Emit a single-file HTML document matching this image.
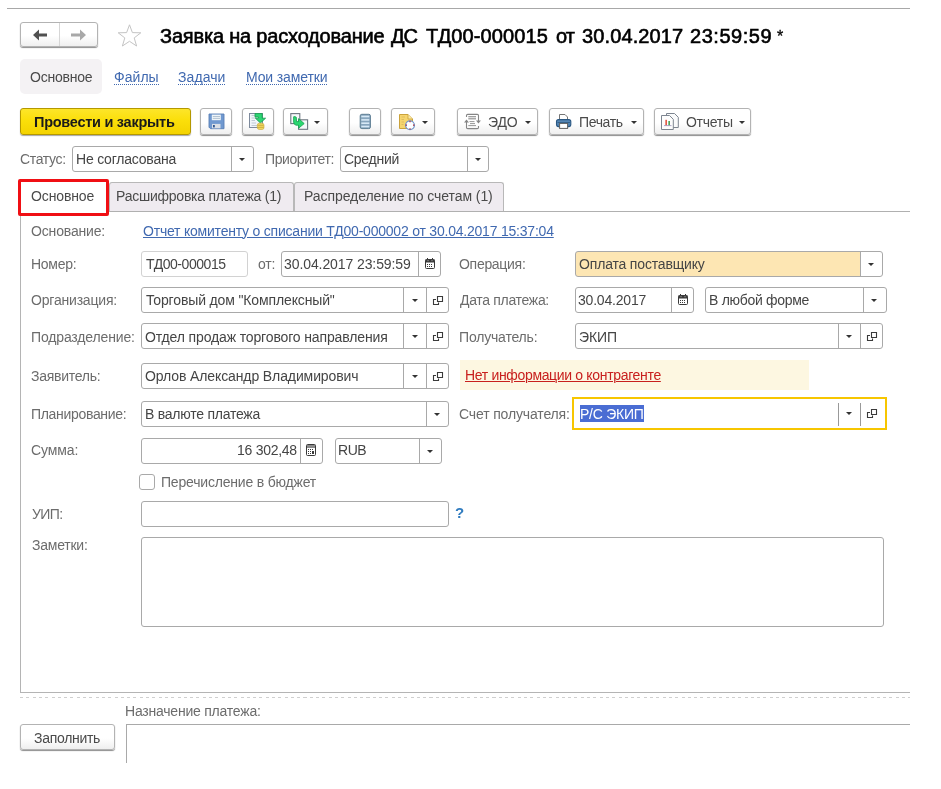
<!DOCTYPE html>
<html><head><meta charset="utf-8">
<style>
html,body{margin:0;padding:0;background:#fff;}
body{width:941px;height:789px;position:relative;overflow:hidden;font-family:"Liberation Sans",sans-serif;}
.s{position:absolute;box-sizing:border-box;}
.t{position:absolute;white-space:pre;line-height:16px;font-family:"Liberation Sans",sans-serif;z-index:5;will-change:transform;}
.measure .s{display:none;}
.und{text-decoration:underline;text-underline-offset:1px;text-decoration-thickness:1px;}
.dot{background-image:repeating-linear-gradient(90deg,currentColor 0 1px,transparent 1px 2px);background-size:100% 1px;background-repeat:no-repeat;background-position:0 100%;}
.fld{border:1px solid #a9a9a9;border-radius:3px;background:#fff;}
.sep{width:1px;background:#a9a9a9;}
.btn{border:1px solid #b3b3b3;border-radius:3px;background:linear-gradient(#fff 0%,#fff 55%,#efefef 100%);box-shadow:0 1px 1px rgba(0,0,0,.45);}
.arr{width:0;height:0;border-left:3px solid transparent;border-right:3px solid transparent;border-top:3px solid #333;}
.tab{border:1px solid #b8b8b8;border-bottom:none;border-radius:3px 3px 0 0;background:#efebf0;}
</style></head>
<body>
<!-- top line -->
<div class="s" style="left:7px;top:8px;width:903px;height:1px;background:#a8a8a8"></div>
<!-- nav buttons -->
<div class="s btn" style="left:20px;top:22px;width:78px;height:25px;"></div>
<div class="s" style="left:59px;top:23px;width:1px;height:23px;background:#d6d6d6"></div>
<svg class="s" style="left:30px;top:27px" width="20" height="16" viewBox="0 0 20 16"><path d="M3 8 L9 2.5 L9 6.5 L17 6.5 L17 9.5 L9 9.5 L9 13.5 Z" fill="#505050"/></svg>
<svg class="s" style="left:69px;top:27px" width="20" height="16" viewBox="0 0 20 16"><path d="M17 8 L11 2.5 L11 6.5 L2 6.5 L2 9.5 L11 9.5 L11 13.5 Z" fill="#a8a8a8"/></svg>
<!-- star -->
<svg class="s" style="left:116px;top:23px" width="27" height="25" viewBox="0 0 27 25"><path d="M13.5 1.8 L16.4 9.6 L24.8 9.8 L18.2 14.9 L20.6 23 L13.5 18.3 L6.4 23 L8.8 14.9 L2.2 9.8 L10.6 9.6 Z" fill="none" stroke="#c4c4c4" stroke-width="1"/></svg>

<!-- section nav bg -->
<div class="s" style="left:20px;top:59px;width:82px;height:35px;border-radius:5px;background:#f4f2f4"></div>

<!-- toolbar -->
<div class="s" style="left:20px;top:108px;width:171px;height:27px;border:1px solid #b49800;border-radius:3px;background:linear-gradient(#fde52a 0%,#fbdf0a 45%,#f4d300 100%);box-shadow:0 1px 1px rgba(0,0,0,.35)"></div>
<div class="s btn" style="left:200px;top:108px;width:32px;height:27px"></div>
<div class="s btn" style="left:242px;top:108px;width:32px;height:27px"></div>
<div class="s btn" style="left:283px;top:108px;width:45px;height:27px"></div>
<div class="s btn" style="left:349px;top:108px;width:32px;height:27px"></div>
<div class="s btn" style="left:391px;top:108px;width:44px;height:27px"></div>
<div class="s btn" style="left:457px;top:108px;width:81px;height:27px"></div>
<div class="s btn" style="left:549px;top:108px;width:95px;height:27px"></div>
<div class="s btn" style="left:654px;top:108px;width:97px;height:27px"></div>
<!-- icons: floppy -->
<svg class="s" style="left:204px;top:110px" width="25" height="22" viewBox="0 0 25 22">
<path d="M5 4 H20 V18.7 H6.5 L5 17.2 Z" fill="#7099d0" stroke="#5a80b6" stroke-width="0.9"/>
<rect x="7.8" y="4.6" width="9" height="5.6" fill="#eef4f8"/>
<path d="M8.8 6.5 H16 M8.8 8.4 H16" stroke="#a3b6c8" stroke-width="0.8"/>
<rect x="8" y="13.9" width="8.5" height="4.4" fill="#d9dfe6"/>
<rect x="9" y="15" width="1.8" height="2.4" fill="#2f558f"/>
</svg>
<!-- post icon -->
<svg class="s" style="left:245px;top:110px" width="25" height="22" viewBox="0 0 25 22">
<rect x="4.5" y="3.5" width="13" height="14" fill="#f1f5f9" stroke="#7e8a9c"/>
<path d="M6.5 5.5 H10 M6.5 8 H11 M6.5 10.5 H10 M6.5 13 H11 M6.5 15.5 H12" stroke="#b4bfcc" stroke-width="0.8"/>
<path d="M10 3.6 H17.2 V8.2 H20.6 L15.4 13 L10.4 8.2 H13.6 V7 H10 Z" fill="#2ed674" stroke="#159a4c" stroke-width="0.8"/>
<rect x="12.3" y="13.2" width="6.7" height="6.3" rx="2" fill="#f0d860" stroke="#c7a63a" stroke-width="0.6"/>
<path d="M12.6 15.3 H18.7 M12.6 17.4 H18.7" stroke="#c7a63a" stroke-width="0.8"/>
</svg>
<!-- copy/transfer icon -->
<svg class="s" style="left:286px;top:110px" width="25" height="22" viewBox="0 0 25 22">
<rect x="4.8" y="3.6" width="9" height="10" fill="#f6f8fa" stroke="#6d7580" stroke-width="1.1"/>
<rect x="12.6" y="9.8" width="9" height="9.5" fill="#f6f8fa" stroke="#6d7580" stroke-width="1.1"/>
<path d="M7.6 6.8 Q9 6.2 10.3 7.3 L10.6 11.6 H12.6 V8.6 L18.2 13.6 L12.6 18.2 V15.2 H10 Q7.6 14.6 7.6 12 Z" fill="#2bd771" stroke="#14a04e" stroke-width="0.8"/>
</svg>
<div class="s arr" style="left:314px;top:121px"></div>
<!-- list icon -->
<svg class="s" style="left:353px;top:110px" width="25" height="22" viewBox="0 0 25 22">
<rect x="7.2" y="4.3" width="10.2" height="14.3" rx="1.6" fill="#86a5bd" stroke="#5d7e93"/>
<rect x="8.3" y="5.7" width="8" height="1.6" fill="#d7e9f6"/><rect x="8.3" y="9.1" width="8" height="1.6" fill="#d7e9f6"/><rect x="8.3" y="12.4" width="8" height="1.6" fill="#d7e9f6"/><rect x="8.3" y="15.7" width="8" height="1.6" fill="#d7e9f6"/>
</svg>
<!-- doc with clock icon -->
<svg class="s" style="left:395px;top:110px" width="25" height="22" viewBox="0 0 25 22">
<path d="M4.5 4.5 H13 L17.5 9 V18.5 H4.5 Z" fill="#f6d56e" stroke="#caa23c"/>
<path d="M13 4.5 V9 H17.5" fill="#fbe9a6" stroke="#caa23c" stroke-width="0.8"/>
<path d="M6.5 7 H10 M6.5 9.5 H9 M6.5 12 H9 M6.5 14.5 H8.5" stroke="#d9b85a" stroke-width="0.8"/>
<circle cx="15" cy="15.2" r="4.4" fill="#fff" stroke="#7196c9" stroke-width="1.3"/>
<path d="M15 10.8 V12.2 M15 18.2 V19.6 M10.6 15.2 H12 M18 15.2 H19.4" stroke="#b02a3a" stroke-width="1.2"/>
</svg>
<div class="s arr" style="left:422px;top:121px"></div>
<!-- EDO icon -->
<svg class="s" style="left:460px;top:110px" width="25" height="22" viewBox="0 0 25 22">
<g fill="none" stroke="#858585" stroke-width="1.1">
<path d="M6.5 7 V5.6 Q6.5 4.4 7.7 4.4 H17.3 Q18.5 4.4 18.5 5.6 V11"/>
<path d="M6.5 12 V17.4 Q6.5 18.6 7.7 18.6 H17.3 Q18.5 18.6 18.5 17.4 V16"/>
</g>
<path d="M16 10.6 H20.9 L18.45 13.4 Z" fill="#858585"/>
<path d="M4 12.6 L6.5 9.6 L9 12.6 Z" fill="#858585"/>
<path d="M8.3 6.6 H16 M9.5 11.6 H14.5 M10 13.6 H15 M8.3 15.6 H16" stroke="#8a8a8a" stroke-width="0.9"/>
<path d="M8.3 8.6 H16" stroke="#a8a8a8" stroke-width="1.8"/>
</svg>
<div class="s arr" style="left:525px;top:121px"></div>
<!-- print icon -->
<svg class="s" style="left:552px;top:110px" width="25" height="22" viewBox="0 0 25 22">
<path d="M7.5 4.5 H13 L15.5 7 V10.5 H7.5 Z" fill="#fff" stroke="#747474"/>
<rect x="4.5" y="9.6" width="14.3" height="7" rx="2" fill="#5485b3" stroke="#2b5883" stroke-width="1.1"/>
<path d="M5.5 12.5 H18" stroke="#2b5883" stroke-width="0.8"/>
<rect x="7.6" y="13.4" width="8" height="5" fill="#fff" stroke="#5f5f5f"/>
</svg>
<div class="s arr" style="left:631px;top:121px"></div>
<!-- reports icon -->
<svg class="s" style="left:657px;top:110px" width="25" height="22" viewBox="0 0 25 22">
<path d="M9.5 3.5 H17.5 L21.3 7.3 V17.5 H9.5 Z" fill="#fafbfc" stroke="#7d8590"/>
<path d="M4.5 5.5 H12.5 L16.3 9.3 V19.5 H4.5 Z" fill="#fdfdfd" stroke="#7d8590"/>
<rect x="8.4" y="9.8" width="1.5" height="5.5" fill="#e24a35"/>
<rect x="11.4" y="11" width="1.5" height="4.3" fill="#3b9b4c"/>
<path d="M7 15.6 H14.5" stroke="#8a80b0" stroke-width="0.7"/>
</svg>
<div class="s arr" style="left:739px;top:121px"></div>

<!-- status row -->
<div class="s fld" style="left:72px;top:146px;width:182px;height:26px"></div>
<div class="s sep" style="left:231px;top:147px;height:24px"></div>
<div class="s arr" style="left:239px;top:158px"></div>
<div class="s fld" style="left:340px;top:146px;width:149px;height:26px"></div>
<div class="s sep" style="left:467px;top:147px;height:24px"></div>
<div class="s arr" style="left:475px;top:158px"></div>

<!-- tabs -->
<div class="s tab" style="left:109px;top:182px;width:185px;height:30px"></div>
<div class="s tab" style="left:294px;top:182px;width:210px;height:30px"></div>
<div class="s" style="left:109px;top:211px;width:801px;height:1px;background:#b0b0b0"></div>
<div class="s" style="left:18px;top:179px;width:91px;height:37px;border:3px solid #f00f14;border-radius:2px;background:#fff"></div>

<!-- panel borders -->
<div class="s" style="left:20px;top:216px;width:1px;height:477px;background:#b4b4b4"></div>
<div class="s" style="left:20px;top:692px;width:890px;height:1px;background:#b4b4b4"></div>

<!-- row: Номер -->
<div class="s fld" style="left:141px;top:251px;width:107px;height:26px;border-color:#d2d2d2"></div>
<div class="s fld" style="left:281px;top:251px;width:160px;height:26px"></div>
<div class="s sep" style="left:418px;top:252px;height:24px"></div>
<svg class="s" style="left:425px;top:258px" width="11" height="11" viewBox="0 0 11 11"><rect x="0.5" y="1.5" width="9" height="9" rx="1" fill="#fff" stroke="#3a3a3a"/><rect x="0.5" y="1.5" width="9" height="3" fill="#3a3a3a"/><rect x="2" y="0" width="1" height="2" fill="#3a3a3a"/><rect x="7" y="0" width="1" height="2" fill="#3a3a3a"/><rect x="2.5" y="2.2" width="1" height="1" fill="#bbb"/><rect x="6.5" y="2.2" width="1" height="1" fill="#bbb"/><rect x="2" y="6" width="1" height="1" fill="#3a3a3a"/><rect x="4" y="6" width="1" height="1" fill="#3a3a3a"/><rect x="6" y="6" width="1" height="1" fill="#3a3a3a"/><rect x="2" y="8" width="1" height="1" fill="#3a3a3a"/><rect x="4" y="8" width="1" height="1" fill="#3a3a3a"/><rect x="6" y="8" width="1" height="1" fill="#3a3a3a"/></svg>
<div class="s fld" style="left:575px;top:251px;width:308px;height:26px;background:linear-gradient(90deg,#fde6b3 0,#fde6b3 285px,#fff 285px)"></div>
<div class="s sep" style="left:860px;top:252px;height:24px"></div>
<div class="s arr" style="left:868px;top:263px"></div>

<!-- row: Организация -->
<div class="s fld" style="left:141px;top:287px;width:308px;height:26px"></div>
<div class="s sep" style="left:403px;top:288px;height:24px"></div>
<div class="s sep" style="left:426px;top:288px;height:24px"></div>
<div class="s arr" style="left:412px;top:299px"></div>
<svg class="s open" style="left:432px;top:295px" width="12" height="11" viewBox="0 0 12 11"><path d="M5.5 1.5 H10.5 V6.5 H5.5 Z" fill="none" stroke="#3a3a3a" stroke-width="1.1"/><path d="M4 4.5 H1.5 V9.5 H6.5 V7.5" fill="none" stroke="#3a3a3a" stroke-width="1.1"/></svg>
<div class="s fld" style="left:575px;top:287px;width:119px;height:26px"></div>
<div class="s sep" style="left:671px;top:288px;height:24px"></div>
<svg class="s" style="left:678px;top:294px" width="11" height="11" viewBox="0 0 11 11"><rect x="0.5" y="1.5" width="9" height="9" rx="1" fill="#fff" stroke="#3a3a3a"/><rect x="0.5" y="1.5" width="9" height="3" fill="#3a3a3a"/><rect x="2" y="0" width="1" height="2" fill="#3a3a3a"/><rect x="7" y="0" width="1" height="2" fill="#3a3a3a"/><rect x="2.5" y="2.2" width="1" height="1" fill="#bbb"/><rect x="6.5" y="2.2" width="1" height="1" fill="#bbb"/><rect x="2" y="6" width="1" height="1" fill="#3a3a3a"/><rect x="4" y="6" width="1" height="1" fill="#3a3a3a"/><rect x="6" y="6" width="1" height="1" fill="#3a3a3a"/><rect x="2" y="8" width="1" height="1" fill="#3a3a3a"/><rect x="4" y="8" width="1" height="1" fill="#3a3a3a"/><rect x="6" y="8" width="1" height="1" fill="#3a3a3a"/></svg>
<div class="s fld" style="left:705px;top:287px;width:182px;height:26px"></div>
<div class="s sep" style="left:863px;top:288px;height:24px"></div>
<div class="s arr" style="left:871px;top:299px"></div>

<!-- row: Подразделение -->
<div class="s fld" style="left:141px;top:323px;width:308px;height:26px"></div>
<div class="s sep" style="left:403px;top:324px;height:24px"></div>
<div class="s sep" style="left:426px;top:324px;height:24px"></div>
<div class="s arr" style="left:412px;top:335px"></div>
<svg class="s" style="left:432px;top:331px" width="12" height="11" viewBox="0 0 12 11"><path d="M5.5 1.5 H10.5 V6.5 H5.5 Z" fill="none" stroke="#3a3a3a" stroke-width="1.1"/><path d="M4 4.5 H1.5 V9.5 H6.5 V7.5" fill="none" stroke="#3a3a3a" stroke-width="1.1"/></svg>
<div class="s fld" style="left:575px;top:323px;width:308px;height:26px"></div>
<div class="s sep" style="left:838px;top:324px;height:24px"></div>
<div class="s sep" style="left:860px;top:324px;height:24px"></div>
<div class="s arr" style="left:846px;top:335px"></div>
<svg class="s" style="left:866px;top:331px" width="12" height="11" viewBox="0 0 12 11"><path d="M5.5 1.5 H10.5 V6.5 H5.5 Z" fill="none" stroke="#3a3a3a" stroke-width="1.1"/><path d="M4 4.5 H1.5 V9.5 H6.5 V7.5" fill="none" stroke="#3a3a3a" stroke-width="1.1"/></svg>

<!-- row: Заявитель -->
<div class="s fld" style="left:141px;top:363px;width:308px;height:26px"></div>
<div class="s sep" style="left:403px;top:364px;height:24px"></div>
<div class="s sep" style="left:426px;top:364px;height:24px"></div>
<div class="s arr" style="left:412px;top:375px"></div>
<svg class="s" style="left:432px;top:371px" width="12" height="11" viewBox="0 0 12 11"><path d="M5.5 1.5 H10.5 V6.5 H5.5 Z" fill="none" stroke="#3a3a3a" stroke-width="1.1"/><path d="M4 4.5 H1.5 V9.5 H6.5 V7.5" fill="none" stroke="#3a3a3a" stroke-width="1.1"/></svg>
<div class="s" style="left:460px;top:360px;width:349px;height:30px;background:#fdf7e1"></div>

<!-- row: Планирование -->
<div class="s fld" style="left:141px;top:401px;width:308px;height:26px"></div>
<div class="s sep" style="left:426px;top:402px;height:24px"></div>
<div class="s arr" style="left:434px;top:413px"></div>
<div class="s" style="left:572px;top:397px;width:315px;height:33px;border:2px solid #f7c600;background:#fff"></div>
<div class="s sep" style="left:838px;top:403px;height:23px;background:#999"></div>
<div class="s sep" style="left:860px;top:403px;height:23px;background:#999"></div>
<div class="s arr" style="left:846px;top:412px"></div>
<svg class="s" style="left:866px;top:408px" width="12" height="11" viewBox="0 0 12 11"><path d="M5.5 1.5 H10.5 V6.5 H5.5 Z" fill="none" stroke="#3a3a3a" stroke-width="1.1"/><path d="M4 4.5 H1.5 V9.5 H6.5 V7.5" fill="none" stroke="#3a3a3a" stroke-width="1.1"/></svg>
<div class="s" style="left:580px;top:405px;width:64px;height:17px;background:#4a6dd3"></div>

<!-- row: Сумма -->
<div class="s fld" style="left:141px;top:438px;width:182px;height:26px"></div>
<div class="s sep" style="left:300px;top:439px;height:24px"></div>
<svg class="s" style="left:306px;top:444px" width="11" height="12" viewBox="0 0 11 12"><rect x="0.5" y="0.5" width="9" height="11" rx="1" fill="#fff" stroke="#3a3a3a"/><rect x="1" y="1" width="8" height="3" fill="#8a8a8a"/><rect x="2" y="5" width="1" height="1" fill="#3a3a3a"/><rect x="4" y="5" width="1" height="1" fill="#3a3a3a"/><rect x="6" y="5" width="1" height="1" fill="#3a3a3a"/><rect x="2" y="7" width="1" height="1" fill="#3a3a3a"/><rect x="4" y="7" width="1" height="1" fill="#3a3a3a"/><rect x="6" y="7" width="2" height="3" fill="#3a3a3a"/><rect x="2" y="9" width="1" height="1" fill="#3a3a3a"/><rect x="4" y="9" width="1" height="1" fill="#3a3a3a"/></svg>
<div class="s fld" style="left:335px;top:438px;width:107px;height:26px"></div>
<div class="s sep" style="left:419px;top:439px;height:24px"></div>
<div class="s arr" style="left:427px;top:450px"></div>

<!-- checkbox -->
<div class="s" style="left:139px;top:474px;width:16px;height:16px;border:1px solid #a9a9a9;border-radius:3px;background:#fff"></div>

<!-- УИП -->
<div class="s fld" style="left:141px;top:501px;width:308px;height:26px"></div>
<!-- Заметки -->
<div class="s fld" style="left:141px;top:537px;width:743px;height:90px"></div>

<!-- dashed line -->
<div class="s" style="left:20px;top:697px;width:890px;height:1px;background:repeating-linear-gradient(90deg,#cfcfcf 0,#cfcfcf 3px,transparent 3px,transparent 6.3px)"></div>
<!-- Заполнить -->
<div class="s btn" style="left:20px;top:724px;width:95px;height:26px"></div>
<!-- Назначение field -->
<div class="s" style="left:126px;top:724px;width:784px;height:1px;background:#a9a9a9"></div>
<div class="s" style="left:126px;top:724px;width:1px;height:39px;background:#a9a9a9"></div>

<div id="t0" class="t" style="left:160.20px;top:28.00px;font-size:20px;font-weight:normal;letter-spacing:-0.189px;color:#000;-webkit-text-stroke:0.6px #000;">Заявка на расходование</div>
<div id="t1" class="t" style="left:390.70px;top:28.00px;font-size:20px;font-weight:normal;letter-spacing:-1.080px;color:#000;-webkit-text-stroke:0.6px #000;">ДС</div>
<div id="t2" class="t" style="left:426.20px;top:28.00px;font-size:20px;font-weight:normal;letter-spacing:0.108px;color:#000;-webkit-text-stroke:0.6px #000;">ТД00-000015</div>
<div id="t3" class="t" style="left:556.20px;top:28.00px;font-size:20px;font-weight:normal;letter-spacing:-0.900px;color:#000;-webkit-text-stroke:0.6px #000;">от</div>
<div id="t4" class="t" style="left:581.70px;top:28.00px;font-size:20px;font-weight:normal;letter-spacing:0.120px;color:#000;-webkit-text-stroke:0.6px #000;">30.04.2017</div>
<div id="t5" class="t" style="left:689.70px;top:28.00px;font-size:20px;font-weight:normal;letter-spacing:0.540px;color:#000;-webkit-text-stroke:0.6px #000;">23:59:59</div>
<div id="t6" class="t" style="left:777.20px;top:29.00px;font-size:16px;font-weight:normal;letter-spacing:0.000px;color:#000;-webkit-text-stroke:0.3px #000;">*</div>
<div id="t7" class="t" style="left:30.20px;top:69.00px;font-size:14px;font-weight:normal;letter-spacing:-0.231px;color:#4a4a4a;">Основное</div>
<div id="t8" class="t dot" style="left:113.70px;top:69.00px;font-size:14px;font-weight:normal;letter-spacing:0.045px;color:#4069b0;">Файлы</div>
<div id="t9" class="t dot" style="left:178.20px;top:69.00px;font-size:14px;font-weight:normal;letter-spacing:0.072px;color:#4069b0;">Задачи</div>
<div id="t10" class="t dot" style="left:246.20px;top:69.00px;font-size:14px;font-weight:normal;letter-spacing:-0.126px;color:#4069b0;">Мои заметки</div>
<div id="t11" class="t" style="left:34.20px;top:114.00px;font-size:14.5px;font-weight:bold;letter-spacing:-0.265px;color:#1a1a1a;">Провести и закрыть</div>
<div id="t12" class="t" style="left:488.20px;top:113.50px;font-size:14px;font-weight:normal;letter-spacing:-0.180px;color:#4a4a4a;">ЭДО</div>
<div id="t13" class="t" style="left:579.20px;top:113.50px;font-size:14px;font-weight:normal;letter-spacing:-0.360px;color:#4a4a4a;">Печать</div>
<div id="t14" class="t" style="left:685.70px;top:113.50px;font-size:14px;font-weight:normal;letter-spacing:-0.288px;color:#4a4a4a;">Отчеты</div>
<div id="t15" class="t" style="left:19.70px;top:151.00px;font-size:14px;font-weight:normal;letter-spacing:-0.330px;color:#6c6c6c;">Статус:</div>
<div id="t16" class="t" style="left:75.70px;top:151.00px;font-size:14px;font-weight:normal;letter-spacing:-0.208px;color:#454545;">Не согласована</div>
<div id="t17" class="t" style="left:264.70px;top:151.00px;font-size:14px;font-weight:normal;letter-spacing:-0.400px;color:#6c6c6c;">Приоритет:</div>
<div id="t18" class="t" style="left:343.70px;top:151.00px;font-size:14px;font-weight:normal;letter-spacing:-0.270px;color:#454545;">Средний</div>
<div id="t19" class="t" style="left:31.20px;top:188.00px;font-size:14px;font-weight:normal;letter-spacing:-0.129px;color:#4a4a4a;">Основное</div>
<div id="t20" class="t" style="left:116.20px;top:188.00px;font-size:14px;font-weight:normal;letter-spacing:-0.237px;color:#4a4a4a;">Расшифровка платежа (1)</div>
<div id="t21" class="t" style="left:304.20px;top:188.00px;font-size:14px;font-weight:normal;letter-spacing:-0.069px;color:#4a4a4a;">Распределение по счетам (1)</div>
<div id="t22" class="t" style="left:30.70px;top:223.00px;font-size:14px;font-weight:normal;letter-spacing:-0.160px;color:#6c6c6c;">Основание:</div>
<div id="t23" class="t und" style="left:142.70px;top:223.00px;font-size:14px;font-weight:normal;letter-spacing:-0.213px;color:#4069b0;">Отчет комитенту о списании ТД00-000002 от 30.04.2017 15:37:04</div>
<div id="t24" class="t" style="left:30.70px;top:256.00px;font-size:14px;font-weight:normal;letter-spacing:-0.288px;color:#6c6c6c;">Номер:</div>
<div id="t25" class="t" style="left:145.70px;top:256.00px;font-size:14px;font-weight:normal;letter-spacing:-0.450px;color:#454545;">ТД00-000015</div>
<div id="t26" class="t" style="left:258.20px;top:256.00px;font-size:14px;font-weight:normal;letter-spacing:-0.180px;color:#6c6c6c;">от:</div>
<div id="t27" class="t" style="left:284.20px;top:256.00px;font-size:14px;font-weight:normal;letter-spacing:-0.090px;color:#454545;">30.04.2017 23:59:59</div>
<div id="t28" class="t" style="left:459.20px;top:256.00px;font-size:14px;font-weight:normal;letter-spacing:-0.293px;color:#6c6c6c;">Операция:</div>
<div id="t29" class="t" style="left:579.20px;top:256.00px;font-size:14px;font-weight:normal;letter-spacing:-0.169px;color:#454545;">Оплата поставщику</div>
<div id="t30" class="t" style="left:30.70px;top:292.00px;font-size:14px;font-weight:normal;letter-spacing:-0.196px;color:#6c6c6c;">Организация:</div>
<div id="t31" class="t" style="left:146.20px;top:292.00px;font-size:14px;font-weight:normal;letter-spacing:-0.137px;color:#454545;">Торговый дом "Комплексный"</div>
<div id="t32" class="t" style="left:460.20px;top:292.00px;font-size:14px;font-weight:normal;letter-spacing:-0.315px;color:#6c6c6c;">Дата платежа:</div>
<div id="t33" class="t" style="left:578.20px;top:292.00px;font-size:14px;font-weight:normal;letter-spacing:-0.200px;color:#454545;">30.04.2017</div>
<div id="t34" class="t" style="left:709.20px;top:292.00px;font-size:14px;font-weight:normal;letter-spacing:-0.300px;color:#454545;">В любой форме</div>
<div id="t35" class="t" style="left:30.70px;top:328.50px;font-size:14px;font-weight:normal;letter-spacing:-0.152px;color:#6c6c6c;">Подразделение:</div>
<div id="t36" class="t" style="left:145.20px;top:328.50px;font-size:14px;font-weight:normal;letter-spacing:-0.136px;color:#454545;">Отдел продаж торгового направления</div>
<div id="t37" class="t" style="left:459.20px;top:328.50px;font-size:14px;font-weight:normal;letter-spacing:-0.180px;color:#6c6c6c;">Получатель:</div>
<div id="t38" class="t" style="left:579.20px;top:328.50px;font-size:14px;font-weight:normal;letter-spacing:-0.060px;color:#454545;">ЭКИП</div>
<div id="t39" class="t" style="left:31.20px;top:368.00px;font-size:14px;font-weight:normal;letter-spacing:-0.260px;color:#6c6c6c;">Заявитель:</div>
<div id="t40" class="t" style="left:145.20px;top:368.00px;font-size:14px;font-weight:normal;letter-spacing:-0.107px;color:#454545;">Орлов Александр Владимирович</div>
<div id="t41" class="t und" style="left:465.20px;top:367.00px;font-size:14px;font-weight:normal;letter-spacing:-0.333px;color:#c8201e;">Нет информации о контрагенте</div>
<div id="t42" class="t" style="left:30.70px;top:406.00px;font-size:14px;font-weight:normal;letter-spacing:-0.315px;color:#6c6c6c;">Планирование:</div>
<div id="t43" class="t" style="left:144.70px;top:406.00px;font-size:14px;font-weight:normal;letter-spacing:-0.240px;color:#454545;">В валюте платежа</div>
<div id="t44" class="t" style="left:459.20px;top:406.00px;font-size:14px;font-weight:normal;letter-spacing:-0.144px;color:#6c6c6c;">Счет получателя:</div>
<div id="t45" class="t" style="left:580.20px;top:406.00px;font-size:14px;font-weight:normal;letter-spacing:-0.257px;color:#ffffff;">Р/С ЭКИП</div>
<div id="t46" class="t" style="left:30.70px;top:442.00px;font-size:14px;font-weight:normal;letter-spacing:-0.108px;color:#6c6c6c;">Сумма:</div>
<div id="t47" class="t" style="left:237.20px;top:442.00px;font-size:14px;font-weight:normal;letter-spacing:-0.270px;color:#454545;">16 302,48</div>
<div id="t48" class="t" style="left:338.20px;top:442.00px;font-size:14px;font-weight:normal;letter-spacing:-0.450px;color:#454545;">RUB</div>
<div id="t49" class="t" style="left:160.70px;top:474.00px;font-size:14px;font-weight:normal;letter-spacing:-0.189px;color:#6c6c6c;">Перечисление в бюджет</div>
<div id="t50" class="t" style="left:31.70px;top:505.50px;font-size:14px;font-weight:normal;letter-spacing:-0.600px;color:#6c6c6c;">УИП:</div>
<div id="t51" class="t" style="left:455.20px;top:505.00px;font-size:15px;font-weight:bold;letter-spacing:0.000px;color:#2f7bbf;">?</div>
<div id="t52" class="t" style="left:31.70px;top:537.00px;font-size:14px;font-weight:normal;letter-spacing:-0.231px;color:#6c6c6c;">Заметки:</div>
<div id="t53" class="t" style="left:125.20px;top:703.00px;font-size:14px;font-weight:normal;letter-spacing:-0.220px;color:#6c6c6c;">Назначение платежа:</div>
<div id="t54" class="t" style="left:34.20px;top:730.00px;font-size:14px;font-weight:normal;letter-spacing:-0.293px;color:#4a4a4a;">Заполнить</div>
</body></html>
